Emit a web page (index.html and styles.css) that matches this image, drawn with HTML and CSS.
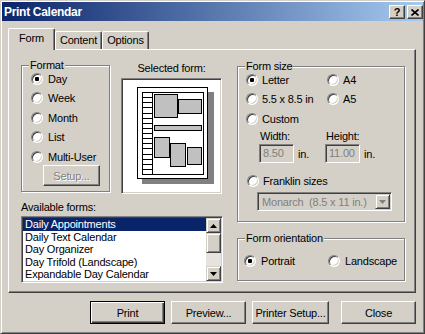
FILE: index.html
```html
<!DOCTYPE html>
<html>
<head>
<meta charset="utf-8">
<title>Print Calendar</title>
<link rel="stylesheet" href="styles.css">
</head>
<body>
<div class="window">
  <div class="titlebar">
    <span class="title">Print Calendar</span>
    <div class="tbtns">
      <span class="tbtn help">?</span>
      <span class="tbtn close"><svg width="8" height="7" viewBox="0 0 8 7"><path d="M0.5 0.5 L7.5 6.5 M7.5 0.5 L0.5 6.5" stroke="#000" stroke-width="1.6" fill="none"/></svg></span>
    </div>
  </div>
  <div class="main">
    <div class="tabs">
      <div class="tab active">Form</div>
      <div class="tab">Content</div>
      <div class="tab">Options</div>
    </div>
    <div class="panel">
      <div class="col-left">
        <div class="top-row">
          <div class="group format">
            <div class="legend">Format</div>
            <div class="opts">
              <div class="opt"><span class="radio on"></span>Day</div>
              <div class="opt"><span class="radio"></span>Week</div>
              <div class="opt"><span class="radio"></span>Month</div>
              <div class="opt"><span class="radio"></span>List</div>
              <div class="opt"><span class="radio"></span>Multi-User</div>
            </div>
            <div class="btn setup disabled">Setup...</div>
          </div>
          <div class="selected">
            <div class="sel-label">Selected form:</div>
            <div class="preview">
              <svg width="97" height="112" viewBox="0 0 97 112">
                <rect x="19" y="12" width="72" height="92" fill="#808080"/>
                <rect x="14.5" y="7.5" width="70" height="91" fill="#fff" stroke="#000"/>
                <rect x="19.5" y="12.5" width="61" height="82" fill="#fff" stroke="#000"/>
                <path d="M29.5 12.5 V94.5 M19.5 17.5 H29.5 M19.5 22.5 H29.5 M19.5 27.5 H29.5 M19.5 33.5 H29.5 M19.5 38.5 H29.5 M19.5 43.5 H29.5 M19.5 48.5 H29.5 M19.5 53.5 H29.5 M19.5 58.5 H29.5 M19.5 63.5 H29.5 M19.5 68.5 H29.5 M19.5 74.5 H29.5 M19.5 79.5 H29.5 M19.5 84.5 H29.5 M19.5 89.5 H29.5" stroke="#000" fill="none"/>
                <g fill="#c0c0c0" stroke="#000">
                  <rect x="31.5" y="14.5" width="23" height="23"/>
                  <rect x="55.5" y="19.5" width="23" height="14"/>
                  <rect x="31.5" y="45.5" width="47" height="5"/>
                  <rect x="31.5" y="57.5" width="15" height="20"/>
                  <rect x="47.5" y="63.5" width="15" height="23"/>
                  <rect x="64.5" y="67.5" width="14" height="17"/>
                </g>
              </svg>
            </div>
          </div>
        </div>
        <div class="avail-label">Available forms:</div>
        <div class="listbox">
          <div class="items">
            <div class="item sel">Daily Appointments</div>
            <div class="item">Daily Text Calendar</div>
            <div class="item">Day Organizer</div>
            <div class="item">Day Trifold (Landscape)</div>
            <div class="item">Expandable Day Calendar</div>
          </div>
          <div class="scrollbar">
            <div class="sbtn"><svg width="7" height="4" viewBox="0 0 7 4"><path d="M3.5 0 L7 4 L0 4 Z" fill="#000"/></svg></div>
            <div class="thumb"></div>
            <div class="track"></div>
            <div class="sbtn"><svg width="7" height="4" viewBox="0 0 7 4"><path d="M0 0 L7 0 L3.5 4 Z" fill="#000"/></svg></div>
          </div>
        </div>
      </div>
      <div class="col-right">
        <div class="group size">
          <div class="legend">Form size</div>
          <div class="size-grid">
            <div class="opt"><span class="radio on"></span>Letter</div>
            <div class="opt"><span class="radio"></span>A4</div>
            <div class="opt"><span class="radio"></span>5.5 x 8.5 in</div>
            <div class="opt"><span class="radio"></span>A5</div>
            <div class="opt"><span class="radio"></span>Custom</div>
          </div>
          <div class="dims">
            <div class="dim">
              <div class="dim-label">Width:</div>
              <div class="dim-row"><span class="field">8.50</span><span class="unit">in.</span></div>
            </div>
            <div class="dim">
              <div class="dim-label">Height:</div>
              <div class="dim-row"><span class="field">11.00</span><span class="unit">in.</span></div>
            </div>
          </div>
          <div class="opt franklin"><span class="radio"></span>Franklin sizes</div>
          <div class="combo">
            <span class="combo-text">Monarch  (8.5 x 11 in.)</span>
            <span class="combo-btn"><svg width="7" height="4" viewBox="0 0 7 4"><path d="M0 0 L7 0 L3.5 4 Z" fill="#808080"/></svg></span>
          </div>
        </div>
        <div class="group orient">
          <div class="legend">Form orientation</div>
          <div class="orient-grid">
            <div class="opt"><span class="radio on"></span>Portrait</div>
            <div class="opt"><span class="radio"></span>Landscape</div>
          </div>
        </div>
      </div>
    </div>
    <div class="actions">
      <div class="btn default print">Print</div>
      <div class="btn preview-btn">Preview...</div>
      <div class="btn setup-btn">Printer Setup...</div>
      <div class="btn close-btn">Close</div>
    </div>
  </div>
</div>
</body>
</html>
```
FILE: styles.css
```css
* { box-sizing: border-box; margin: 0; padding: 0; }
body {
  margin: 0;
  background: #d4d0c8;
  font-family: "Liberation Sans", Arial, sans-serif;
  font-size: 11px;
  letter-spacing: -0.2px;
  color: #000;
}
.window {
  width: 425px;
  height: 334px;
  background: #d4d0c8;
  border: 1px solid;
  border-color: #d4d0c8 #404040 #404040 #d4d0c8;
  box-shadow: inset 1px 1px 0 #fff, inset -1px -1px 0 #808080;
  padding: 1px;
  display: flex;
  flex-direction: column;
}
.titlebar {
  height: 19px;
  flex: none;
  background: linear-gradient(to right, #0a246a, #a6caf0);
  display: flex;
  align-items: center;
  justify-content: space-between;
  padding: 0 0 0 2px;
}
.title {
  color: #fff;
  font-weight: bold;
  font-size: 12px;
  letter-spacing: -0.3px;
}
.tbtns { display: flex; gap: 2px; margin-top: 1px; }
.tbtn {
  width: 16px;
  height: 14px;
  background: #d4d0c8;
  border: 1px solid;
  border-color: #fff #404040 #404040 #fff;
  box-shadow: inset -1px -1px 0 #808080;
  display: flex;
  align-items: center;
  justify-content: center;
  font-weight: bold;
  font-size: 11px;
  line-height: 1;
}
.main {
  flex: 1;
  padding: 7px 7px 0 6px;
  display: flex;
  flex-direction: column;
}
.tabs {
  display: flex;
  align-items: flex-end;
  height: 21px;
  position: relative;
  z-index: 1;
}
.tab {
  width: 47px;
  height: 18px;
  border: 1px solid;
  border-bottom: none;
  border-color: #fff #404040 #404040 #fff;
  border-radius: 2px 2px 0 0;
  box-shadow: inset -1px 0 0 #808080;
  background: #d4d0c8;
  display: flex;
  align-items: center;
  justify-content: center;
  padding-bottom: 1px;
}
.tab.active {
  height: 22px;
  margin-bottom: -1px;
  padding-bottom: 3px;
}
.panel {
  height: 244px;
  flex: none;
  border: 1px solid;
  border-color: #fff #404040 #404040 #fff;
  box-shadow: inset -1px -1px 0 #808080;
  padding: 15px 0 0 12px;
  display: flex;
  gap: 14px;
}
.col-left { width: 202px; }
.top-row { display: flex; align-items: flex-start; }
.group {
  border: 1px solid #808080;
  box-shadow: inset 1px 1px 0 #fff, 1px 1px 0 #fff;
}
.legend {
  width: fit-content;
  margin: -7px 0 -6px 7px;
  padding: 0 1px;
  line-height: 13px;
  background: #d4d0c8;
  position: relative;
}
.format { width: 89px; height: 127px; }
.format .opts { padding: 3px 0 0 9px; }
.opt {
  display: flex;
  align-items: center;
  gap: 5px;
  height: 19.5px;
  white-space: nowrap;
}
.radio {
  flex: none;
  width: 12px;
  height: 12px;
  border-radius: 50%;
  border: 1px solid;
  border-color: #808080 #fff #fff #808080;
  background: #fff;
  box-shadow: inset 1px 1px 0 #404040, inset -1px -1px 0 #d4d0c8;
  position: relative;
}
.radio.on::after {
  content: "";
  position: absolute;
  left: 3px;
  top: 3px;
  width: 4px;
  height: 4px;
  border-radius: 1px;
  background: #000;
}
.btn {
  height: 23px;
  border: 1px solid;
  border-color: #fff #404040 #404040 #fff;
  box-shadow: inset -1px -1px 0 #808080;
  display: flex;
  align-items: center;
  justify-content: center;
  background: #d4d0c8;
}
.btn.disabled {
  color: #808080;
  text-shadow: 1px 1px 0 #fff;
}
.setup {
  width: 57px;
  height: 21px;
  margin: -1.5px 0 0 21px;
}
.selected { margin-left: 11px; width: 101px; }
.sel-label {
  text-align: center;
  line-height: 13px;
  margin: -3px 0 3px;
}
.preview {
  height: 116px;
  background: #fff;
  border: 1px solid;
  border-color: #808080 #fff #fff #808080;
  box-shadow: inset 1px 1px 0 #404040, inset -1px -1px 0 #d4d0c8;
  padding: 1px;
}
.preview svg { display: block; }
.avail-label {
  line-height: 13px;
  margin-top: 7px;
}
.listbox {
  margin-top: 2px;
  height: 67px;
  background: #fff;
  border: 1px solid;
  border-color: #808080 #fff #fff #808080;
  box-shadow: inset 1px 1px 0 #404040, inset -1px -1px 0 #d4d0c8;
  padding: 1px;
  display: flex;
}
.items { flex: 1; overflow: hidden; }
.item {
  height: 12.6px;
  line-height: 12.6px;
  padding-left: 2px;
  white-space: nowrap;
}
.item.sel { background: #0a246a; color: #fff; }
.scrollbar {
  width: 15px;
  display: flex;
  flex-direction: column;
  background: #e6e3de;
}
.sbtn, .thumb {
  background: #d4d0c8;
  border: 1px solid;
  border-color: #d4d0c8 #404040 #404040 #d4d0c8;
  box-shadow: inset 1px 1px 0 #fff, inset -1px -1px 0 #808080;
}
.sbtn {
  height: 15px;
  display: flex;
  align-items: center;
  justify-content: center;
}
.thumb { height: 20px; }
.track { flex: 1; }
.col-right { width: 168px; margin-top: 1px; }
.size { height: 156px; }
.size-grid {
  display: grid;
  grid-template-columns: 81px auto;
  padding: 3px 0 0 8px;
}
.size .opt { gap: 4px; }
.dims { display: flex; padding-left: 21px; }
.dim { width: 66px; }
.dim-label { line-height: 13px; margin-top: 1px; padding-left: 1px; }
.dim-row {
  display: flex;
  align-items: center;
  gap: 4px;
  margin-top: 1.5px;
}
.field {
  width: 35px;
  height: 19px;
  border: 1px solid;
  border-color: #808080 #fff #fff #808080;
  box-shadow: inset 1px 1px 0 #404040, inset -1px -1px 0 #d4d0c8;
  color: #808080;
  padding: 0 0 0 3px;
  line-height: 17px;
}
.franklin { margin-top: 8px; padding-left: 9px; gap: 4px; }
.combo {
  margin: 1.5px 0 0 19px;
  width: 135px;
  height: 19px;
  border: 1px solid;
  border-color: #808080 #fff #fff #808080;
  box-shadow: inset 1px 1px 0 #404040, inset -1px -1px 0 #d4d0c8;
  padding: 1px;
  display: flex;
  align-items: center;
}
.combo-text {
  flex: 1;
  color: #808080;
  white-space: pre;
  padding-left: 3px;
}
.combo-btn {
  width: 15px;
  height: 15px;
  border: 1px solid;
  border-color: #d4d0c8 #404040 #404040 #d4d0c8;
  box-shadow: inset 1px 1px 0 #fff, inset -1px -1px 0 #808080;
  display: flex;
  align-items: center;
  justify-content: center;
}
.orient { height: 43px; margin-top: 16px; }
.orient-grid {
  display: grid;
  grid-template-columns: 84px auto;
  padding: 12px 0 0 6px;
}
.orient .opt { gap: 5px; }
.actions {
  display: flex;
  justify-content: flex-end;
  margin-top: 8px;
}
.print { width: 75px; }
.preview-btn { width: 75px; margin-left: 6px; }
.setup-btn { width: 77px; margin-left: 6px; }
.close-btn { width: 75px; margin-left: 12px; }
.btn.default {
  border-color: #000;
  box-shadow: inset 1px 1px 0 #fff, inset -1px -1px 0 #404040, inset -2px -2px 0 #808080;
}
```
